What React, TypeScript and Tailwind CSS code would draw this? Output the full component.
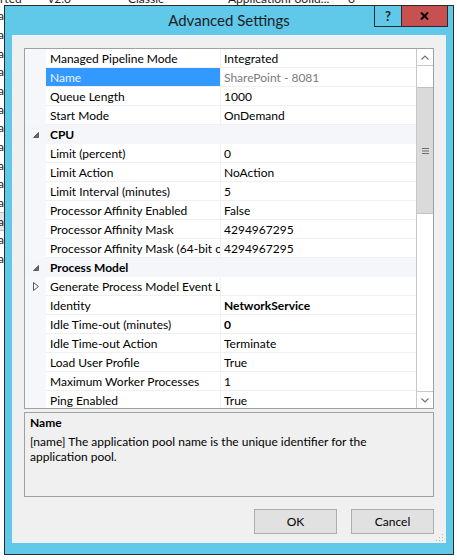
import clsx from "clsx";

interface Prop {
  name: string;
  value?: string;
  category?: boolean;
  selected?: boolean;
  bold?: boolean;
  expandable?: boolean;
}

const props: Prop[] = [
  { name: "Managed Pipeline Mode", value: "Integrated" },
  { name: "Name", value: "SharePoint - 8081", selected: true },
  { name: "Queue Length", value: "1000" },
  { name: "Start Mode", value: "OnDemand" },
  { name: "CPU", category: true },
  { name: "Limit (percent)", value: "0" },
  { name: "Limit Action", value: "NoAction" },
  { name: "Limit Interval (minutes)", value: "5" },
  { name: "Processor Affinity Enabled", value: "False" },
  { name: "Processor Affinity Mask", value: "4294967295" },
  { name: "Processor Affinity Mask (64-bit option)", value: "4294967295" },
  { name: "Process Model", category: true },
  { name: "Generate Process Model Event Log Entry", value: "", expandable: true },
  { name: "Identity", value: "NetworkService", bold: true },
  { name: "Idle Time-out (minutes)", value: "0", bold: true },
  { name: "Idle Time-out Action", value: "Terminate" },
  { name: "Load User Profile", value: "True" },
  { name: "Maximum Worker Processes", value: "1" },
  { name: "Ping Enabled", value: "True" },
];

// rows of the IIS list that peek out behind the dialog
const backRows = Array.from({ length: 14 }, (_, i) => i);

function PropRow({ p }: { p: Prop }) {
  if (p.category) {
    return (
      <div className="flex h-[19px] shrink-0 bg-[#f4f6fa]">
        <div className="w-[21px] shrink-0 flex items-center justify-center pt-[1px]">
          <svg width="6" height="6" viewBox="0 0 6 6">
            <polygon points="5.5,0.5 5.5,5.5 0.5,5.5" fill="#6b6b6b" stroke="#4a4a4a" strokeWidth="0.8" />
          </svg>
        </div>
        <div className="pl-[4px] pt-[1px] leading-[18px] font-bold">{p.name}</div>
      </div>
    );
  }
  return (
    <div className="flex h-[19px] shrink-0">
      <div className="w-[21px] shrink-0 bg-[#f5f7fb] flex items-center justify-center">
        {p.expandable && (
          <svg width="6" height="9" viewBox="0 0 6 9">
            <polygon points="0.5,0.5 5.5,4.5 0.5,8.5" fill="none" stroke="#555555" strokeWidth="1" />
          </svg>
        )}
      </div>
      <div
        className={clsx(
          "w-[175px] shrink-0 border-r border-b border-[#f0f0f0] pl-[4px] pt-[1px] leading-[17px] overflow-hidden whitespace-nowrap",
          p.selected ? "bg-[#3399ff] text-[#eaf3ff]" : "bg-white"
        )}
      >
        {p.name}
      </div>
      <div
        className={clsx(
          "flex-1 min-w-0 border-b border-[#f0f0f0] pl-[3px] pt-[1px] leading-[17px] overflow-hidden whitespace-nowrap",
          p.selected && "text-[#7a7a7a]",
          p.bold && "font-bold"
        )}
      >
        {p.value}
      </div>
    </div>
  );
}

function Chevron({ up }: { up?: boolean }) {
  return (
    <svg width="8" height="5" viewBox="0 0 8 5">
      <polyline
        points={up ? "0.5,4.5 4,1 7.5,4.5" : "0.5,0.5 4,4 7.5,0.5"}
        fill="none"
        stroke="#707070"
        strokeWidth="1.1"
      />
    </svg>
  );
}

function ScrollBar() {
  return (
    <div className="w-[17px] shrink-0 border-l border-[#c8c8c8] flex flex-col bg-white">
      <div className="h-[17px] border-b border-[#c8c8c8] flex items-center justify-center">
        <Chevron up />
      </div>
      <div className="h-[21px]" />
      <div className="h-[127px] bg-[#dadada] border-y border-[#c2c2c2] flex items-center justify-center">
        <svg width="7" height="6" viewBox="0 0 7 6">
          <rect x="0" y="0" width="7" height="1" fill="#6e6e6e" />
          <rect x="0" y="2.5" width="7" height="1" fill="#6e6e6e" />
          <rect x="0" y="5" width="7" height="1" fill="#6e6e6e" />
        </svg>
      </div>
      <div className="flex-1" />
      <div className="h-[17px] border-t border-[#c8c8c8] flex items-center justify-center">
        <Chevron />
      </div>
    </div>
  );
}

export default function App() {
  return (
    <div className="w-[457px] h-[560px] bg-white overflow-hidden font-['Lato',sans-serif] text-[12px] text-black">
      {/* bottom of the list row above the dialog */}
      <div className="h-[5px] overflow-hidden">
        <div className="flex -mt-[9px] leading-[15px] whitespace-nowrap text-[#1e1e1e]">
          <span className="w-[48px] shrink-0">rted</span>
          <span className="w-[80px] shrink-0">v2.0</span>
          <span className="w-[100px] shrink-0">Classic</span>
          <span className="w-[120px] shrink-0">ApplicationPoolId...</span>
          <span>0</span>
        </div>
      </div>

      <div className="flex">
        <div className="w-[4px] shrink-0 overflow-hidden pt-[2px]">
          {backRows.map((i) => (
            <div
              key={i}
              className={clsx(
                "h-[18.67px] flex items-center justify-end whitespace-nowrap text-[#1e1e1e]",
                i === 11 && "bg-[#e6e6e6] border-y border-[#bdbdbd]"
              )}
            >
              a
            </div>
          ))}
        </div>

        <div className="w-[450px] h-[550px] shrink-0 border border-[#2b2b2b] bg-[#60c8e9] flex flex-col">
          <div className="relative h-[29px] shrink-0 flex items-center justify-center text-[15px] text-[#1e1e1e]">
            Advanced Settings
            <div className="absolute right-[5px] top-[-1px] h-[22px] flex border border-[#2b2b2b]">
              <div className="w-[27px] border-r border-[#2b2b2b] flex items-center justify-center font-bold text-[13px] leading-none">
                ?
              </div>
              <div className="w-[45px] bg-[#c75050] flex items-center justify-center">
                <svg width="9" height="8" viewBox="0 0 9 8">
                  <path d="M1 0.5 L8 7.5 M8 0.5 L1 7.5" stroke="#000" strokeWidth="2" />
                </svg>
              </div>
            </div>
          </div>

          <div className="relative mx-[7px] h-[508px] bg-[#f0f0f0] px-[12px] pt-[13px] flex flex-col">
            <div className="h-[361px] border border-[#a0a0a0] bg-white flex">
              <div className="flex-1 min-w-0 flex flex-col overflow-hidden">
                {props.map((p) => (
                  <PropRow key={p.name} p={p} />
                ))}
              </div>
              <ScrollBar />
            </div>

            <div className="mt-[3px] h-[85px] border border-[#a0a0a0] px-[5px] pt-[2px] leading-[15px]">
              <div className="font-bold mb-[4px]">Name</div>
              <div>
                [name] The application pool name is the unique identifier for the
                <br />
                application pool.
              </div>
            </div>

            <div className="mt-[12px] flex justify-end gap-[14px]">
              <button className="w-[83px] h-[25px] border border-[#adadad] bg-[#e1e1e1] text-black">OK</button>
              <button className="w-[83px] h-[25px] border border-[#adadad] bg-[#e1e1e1] text-black">Cancel</button>
            </div>

            {/* size grip */}
            <svg className="absolute right-[2px] bottom-[1px]" width="9" height="9" viewBox="0 0 9 9">
              <rect x="7" y="1" width="1" height="1" fill="#b8b8b8" />
              <rect x="4" y="4" width="1" height="1" fill="#b8b8b8" />
              <rect x="7" y="4" width="1" height="1" fill="#b8b8b8" />
              <rect x="1" y="7" width="1" height="1" fill="#b8b8b8" />
              <rect x="4" y="7" width="1" height="1" fill="#b8b8b8" />
              <rect x="7" y="7" width="1" height="1" fill="#b8b8b8" />
            </svg>
          </div>
        </div>
      </div>
    </div>
  );
}
